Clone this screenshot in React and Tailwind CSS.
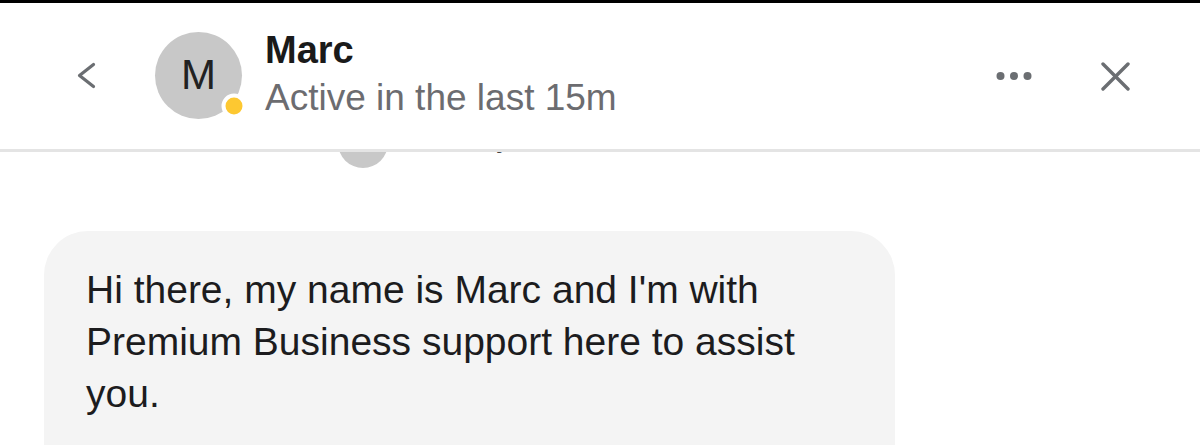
import React from "react";

const font = { fontFamily: '"Liberation Sans", Arial, sans-serif' };

function Chevron() {
  return (
    <svg width="20" height="32" viewBox="0 0 20 32" fill="none" stroke="#6b6e72" strokeWidth="3.2" strokeLinecap="round" strokeLinejoin="round">
      <path d="M17.5 4.5 L3.5 15.5 L17.5 26.5" />
    </svg>
  );
}

function Dots() {
  return (
    <svg width="36" height="10" viewBox="0 0 36 10" fill="#6b6e72">
      <circle cx="4.5" cy="5" r="4" />
      <circle cx="18" cy="5" r="4" />
      <circle cx="31.5" cy="5" r="4" />
    </svg>
  );
}

function Close() {
  return (
    <svg width="29" height="29" viewBox="0 0 29 29" fill="none" stroke="#6b6e72" strokeWidth="3.4" strokeLinecap="round">
      <path d="M2 2 L27 27" />
      <path d="M27 2 L2 27" />
    </svg>
  );
}

export default function App() {
  return (
    <div className="h-[445px] w-[1200px] overflow-hidden bg-white" style={font}>
      {/* Header */}
      <div className="relative z-10 flex h-[152px] items-center border-t-[3px] border-b-[3px] border-t-black border-b-[#e4e4e4] bg-white pl-[76px] pr-[70px]">
        <Chevron />
        <div className="relative ml-[59px] mb-[2px] flex h-[87px] w-[87px] items-center justify-center rounded-full bg-[#c8c8c8]">
          <span className="text-[42px] leading-none text-[#222]">M</span>
          <span className="absolute left-[79px] top-[74px] h-[25px] w-[25px] -translate-x-1/2 -translate-y-1/2 rounded-full border-[4px] border-white bg-[#fdc831]" />
        </div>
        <div className="ml-[23px] mb-[5px] flex flex-col">
          <div className="text-[38px] font-bold leading-[48px] text-[#1a1a1a]">Marc</div>
          <div className="text-[37px] leading-[48px] text-[#6c6c70]">Active in the last 15m</div>
        </div>
        <div className="ml-auto flex items-center gap-[69px]">
          <Dots />
          <Close />
        </div>
      </div>

      {/* Messages */}
      <div className="overflow-hidden">
        <div className="-mt-[34px] flex items-start gap-[35px] pl-[338px]">
          <div className="h-[50px] w-[50px] rounded-full bg-[#c8c8c8]" />
          <div className="-mt-[6px] text-[30px] leading-[50px] text-[#444]">Marc joined the conversation</div>
        </div>
        <div className="ml-[44px] mt-[63px] w-[851px] rounded-[44px] bg-[#f4f4f4] pb-[90px] pl-[42px] pr-[42px] pt-[33px]">
          <p className="text-[39px] leading-[52px] text-[#1c1c1e]">
            Hi there, my name is Marc and I'm with Premium Business support here to assist you.
          </p>
        </div>
      </div>
    </div>
  );
}
